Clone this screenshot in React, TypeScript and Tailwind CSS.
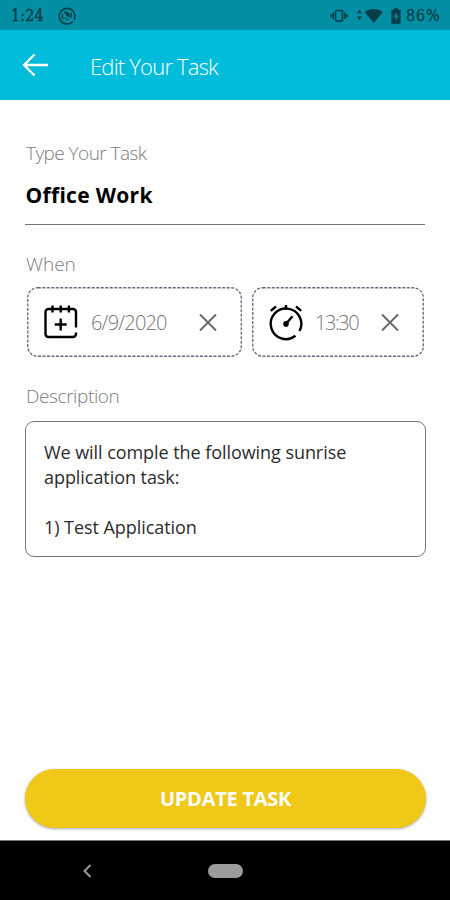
import React from "react";

function StatusBar() {
  return (
    <div className="flex h-[30px] items-center justify-between bg-[#028fa3] pl-[11px] pr-[9px] pt-[2px] font-['DejaVu_Serif_Condensed','DejaVu_Serif',serif] text-[#033e49]">
      <div className="flex items-center gap-[13px]">
        <span className="w-[34px] whitespace-nowrap text-[16px] font-normal leading-none tracking-[0.1px] [-webkit-text-stroke:0.4px_#033e49]">1:24</span>
        <svg className="h-[18px] w-[18px]" viewBox="0 0 18 18" fill="none" stroke="currentColor" strokeWidth="1.6">
          <path d="M14.8 14.5A7.8 7.8 0 1 1 16 12.8" />
          <path d="M5.2 12A4.8 4.8 0 0 1 4.6 7M12.8 6A4.8 4.8 0 0 1 13.2 11" strokeWidth="1.3" />
          <path d="M5.5 5c3.4-1.6 6.8 1.2 7 5.5L9.5 9.6 5.5 5Z" fill="currentColor" stroke="none" />
          <path d="M6.5 10.5l4 2.5" strokeWidth="1.3" />
        </svg>
      </div>
      <div className="flex items-center">
        <svg className="h-[16px] w-[18px]" viewBox="0 0 18 16" fill="none" stroke="currentColor">
          <rect x="5.5" y="2.5" width="7" height="10.5" rx="1" strokeWidth="1.6" />
          <path d="M3.2 4.5v6.5M14.8 4.5v6.5M1 6.2v3M17 6.2v3" strokeWidth="1.6" />
        </svg>
        <svg className="ml-[9px] h-[16px] w-[26px]" viewBox="0 0 26 16" fill="currentColor">
          <path d="M0 5.2 2.4 1.5l2.4 3.7ZM0 8.6h4.8l-2.4 3.7Z" />
          <path d="M7.8 4.2C12.5-.1 21-.1 25.8 4.2L16.8 15Z" />
        </svg>
        <svg className="ml-[8px] h-[16px] w-[10px]" viewBox="0 0 10 16">
          <path d="M3 .2h4v1.6h2.6v14H.4v-14H3Z" fill="currentColor" />
          <path d="M5.6 3.6 2.4 9h2.2v4l3.2-5.4H5.6Z" fill="#028397" />
        </svg>
        <span className="ml-[5px] w-[35px] whitespace-nowrap text-[16px] leading-none tracking-[0.8px] [-webkit-text-stroke:0.3px_#033e49]">86%</span>
      </div>
    </div>
  );
}

function Header() {
  return (
    <header className="flex h-[70px] items-center bg-[#00bbda] pl-[22px] text-white">
      <svg className="h-[24px] w-[26px]" viewBox="0 0 26 24" fill="none" stroke="currentColor" strokeWidth="2.3">
        <path d="M26 12H2M12.5 1.5 2 12 12.5 22.5" />
      </svg>
      <h1 className="ml-[42px] pt-[2px] text-[22px] font-light leading-none tracking-[-0.8px]">Edit Your Task</h1>
    </header>
  );
}

function CalendarIcon() {
  return (
    <svg className="h-[34px] w-[34px]" viewBox="0 0 34 34" fill="none" stroke="#000" strokeWidth="2.4">
      <path d="M32 22.5V7a3 3 0 0 0-3-3H4.5a3 3 0 0 0-3 3v22a3 3 0 0 0 3 3H29a3 3 0 0 0 3-3v-1.5" />
      <path d="M8.5.5v7M16.7.5v7M24.9.5v7" />
      <path d="M16.7 13.5v12M10.7 19.5h12" />
    </svg>
  );
}

function ClockIcon() {
  return (
    <svg className="h-[36px] w-[34px] overflow-visible" viewBox="0 0 34 36" fill="none" stroke="#000" strokeWidth="2.4">
      <path d="M26.5 31.8A15.3 15.3 0 1 1 30.5 27" />
      <path d="M17 1v4.500M1.8 6.8 7 2.5M32.2 6.8 27 2.5" />
      <path d="M17 19.8 23.5 12.3" />
      <circle cx="17" cy="19.9" r="2.8" fill="#000" stroke="none" />
    </svg>
  );
}

function ClearIcon() {
  return (
    <svg className="h-[18px] w-[18px]" viewBox="0 0 18 18" fill="none" stroke="#666" strokeWidth="1.9">
      <path d="m1 1.500 16 16M17 1.500 1 17.500" />
    </svg>
  );
}

function DashedFrame({ width }: { width: number }) {
  return (
    <svg className="absolute inset-0 h-full w-full" fill="none">
      <rect x="0.75" y="0.75" width={width - 1.5} height="68.5" rx="10" stroke="#66667c" strokeWidth="1.3" strokeDasharray="3 1.5" />
    </svg>
  );
}

function Label({ children }: { children: React.ReactNode }) {
  return <p className="h-6 pl-[1px] text-[19px] font-light leading-6 text-[#7c7c7c]">{children}</p>;
}

function App() {
  return (
    <div className="flex h-[900px] w-[450px] flex-col bg-white font-['Open_Sans','Noto_Sans',sans-serif]">
      <StatusBar />
      <Header />

      <main className="flex flex-1 flex-col px-[25px] pt-[41px]">
        <Label>
          <span className="tracking-[-0.55px]">Type Your Task</span>
        </Label>
        <div className="mt-4 h-[44px] border-b border-[#777] pl-[0.5px] text-[21px] font-bold leading-[28px] tracking-[0.3px] text-black">
          Office Work
        </div>

        <div className="mt-[27px]">
          <Label>When</Label>
        </div>
        <div className="mt-[11px] flex gap-[10px] pl-[2px]">
          <div className="relative flex h-[70px] w-[215px] items-center pl-[17px] pr-[25px]">
            <DashedFrame width={215} />
            <CalendarIcon />
            <span className="ml-[13px] flex-1 pt-[2px] text-[20px] font-light tracking-[-0.8px] text-[#777]">6/9/2020</span>
            <ClearIcon />
          </div>
          <div className="relative flex h-[70px] w-[172px] items-center pl-[17px] pr-[25px]">
            <DashedFrame width={172} />
            <ClockIcon />
            <span className="ml-[12px] flex-1 pt-[2px] text-[20px] font-light tracking-[-1.45px] text-[#777]">13:30</span>
            <ClearIcon />
          </div>
        </div>

        <div className="mt-[27px]">
          <Label>
            <span className="tracking-[-0.4px]">Description</span>
          </Label>
        </div>
        <div className="mt-[13px] h-[136px] w-[401px] whitespace-pre-line rounded-[9px] border border-[#777] px-[18px] pt-[18px] text-[18px] leading-[25px] tracking-[-0.06px] text-[#2c2c2c]">
          {"We will comple the following sunrise\napplication task:\n\n1) Test Application"}
        </div>

        <button className="mb-[12px] mt-auto h-[59px] w-[401px] rounded-full bg-[#f0c817] text-[20px] font-bold tracking-[-0.25px] text-white shadow-[0_1px_3px_rgba(0,0,0,0.35)]">
          UPDATE TASK
        </button>
      </main>

      <nav className="flex h-[60px] items-center border-t border-[#777] bg-black pl-[83px]">
        <svg className="h-[14px] w-[9px]" viewBox="0 0 9 14" fill="none" stroke="#999" strokeWidth="2">
          <path d="M7.500 1 1.500 7l6 6" />
        </svg>
        <div className="ml-[116px] h-[14px] w-[35px] rounded-full bg-[#9c9c9c]" />
      </nav>
    </div>
  );
}

export default App;
